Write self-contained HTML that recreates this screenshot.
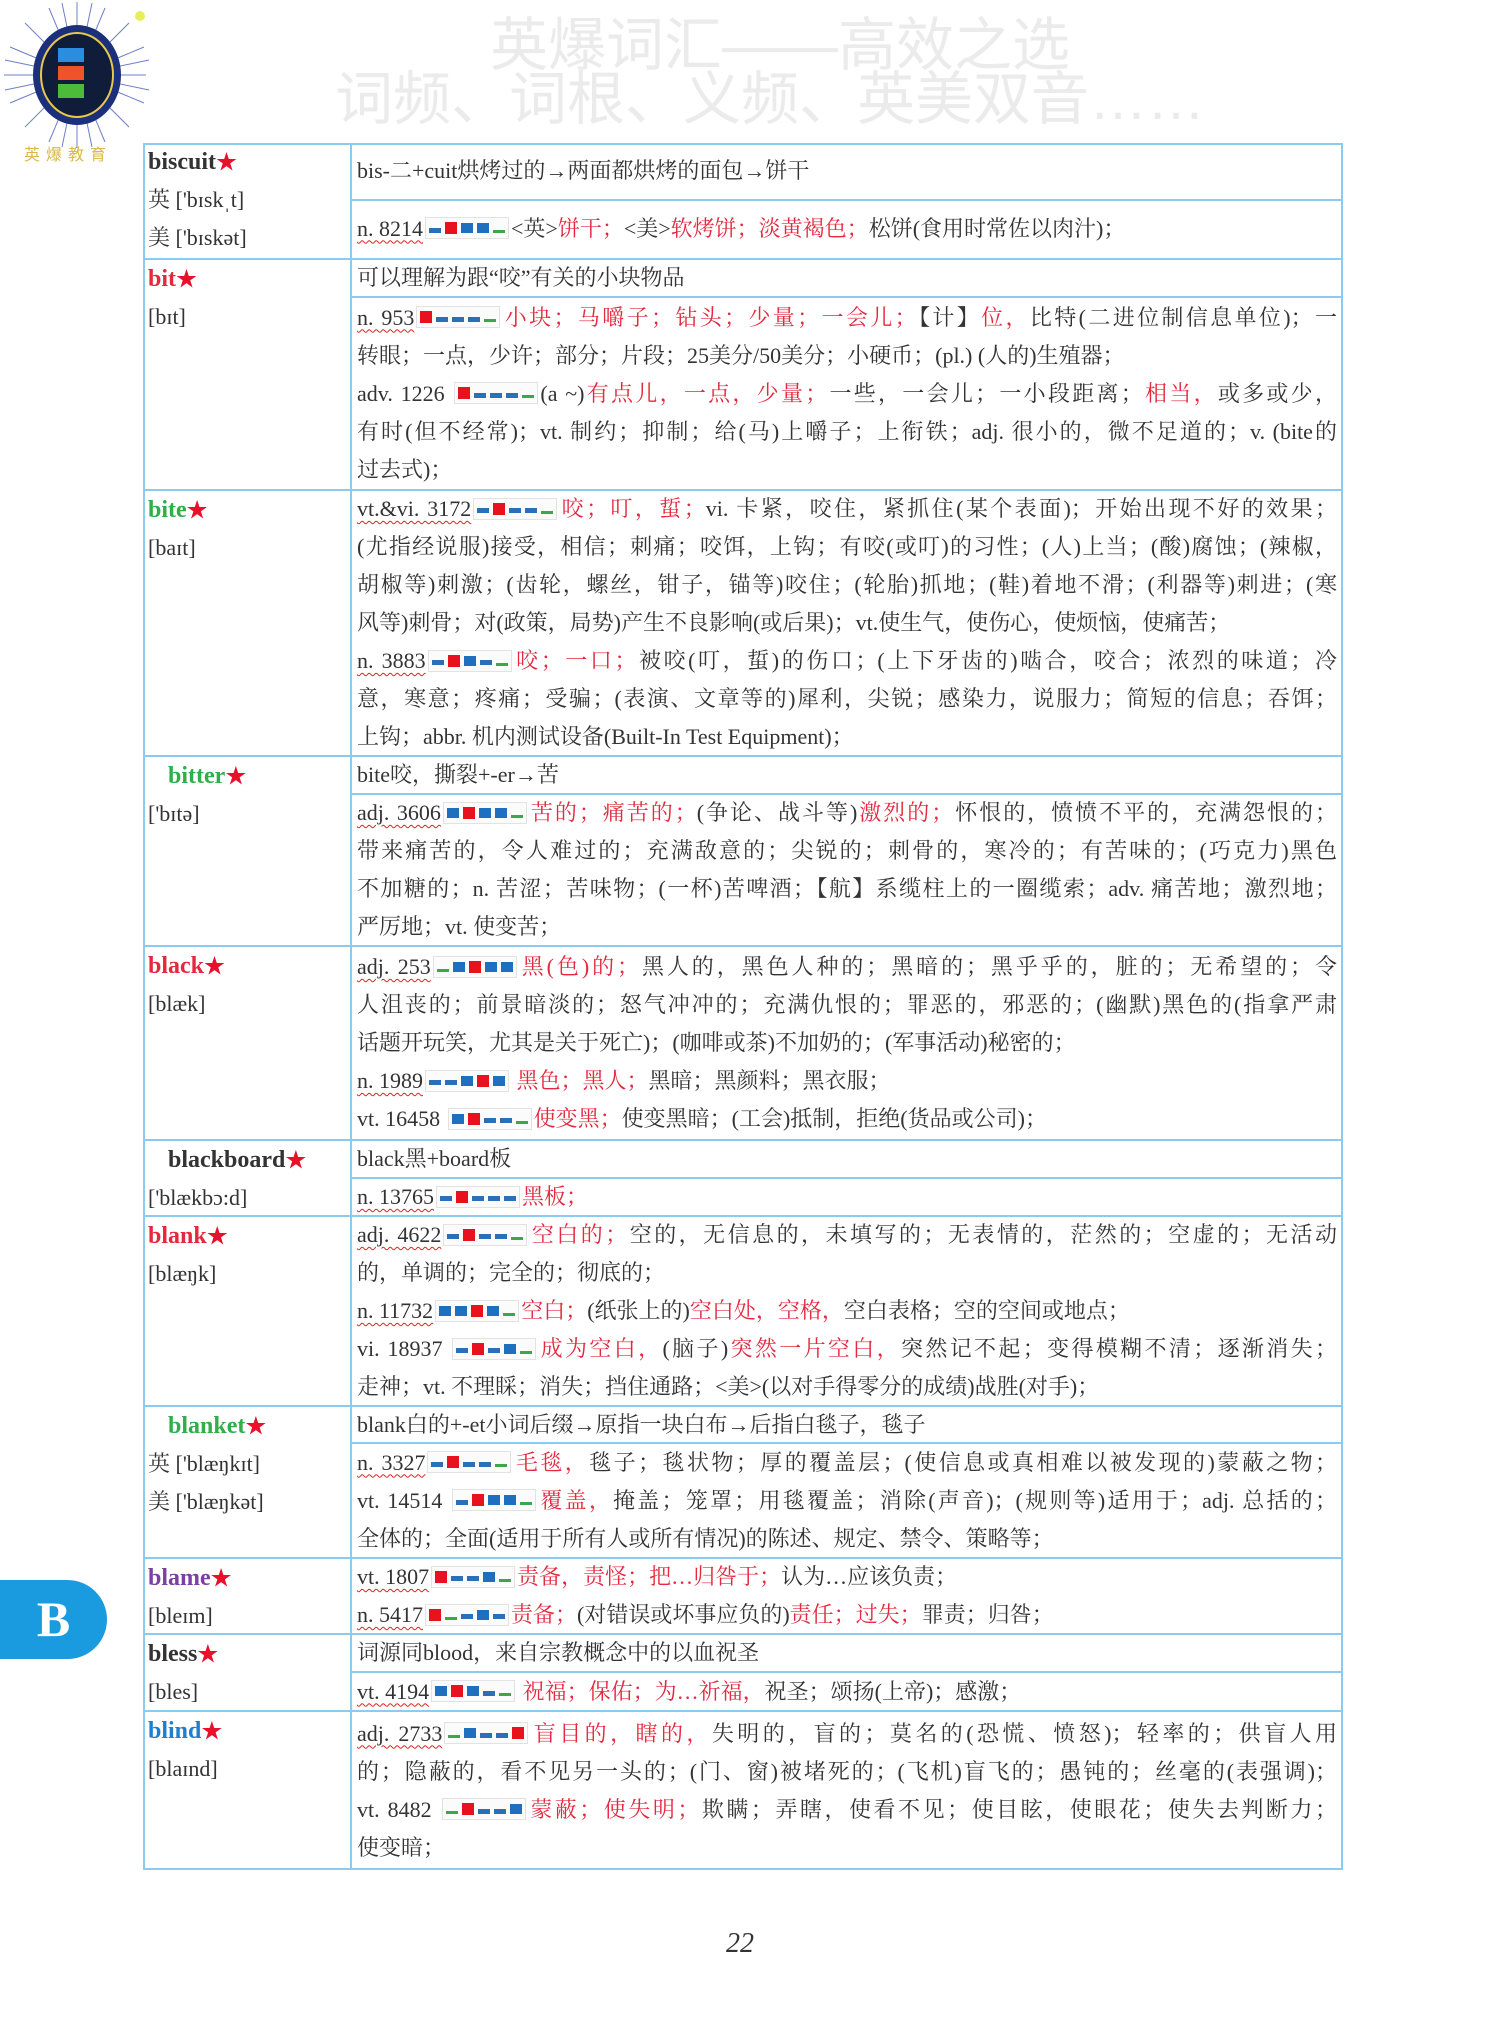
<!DOCTYPE html>
<html><head><meta charset="utf-8">
<style>
*{margin:0;padding:0;box-sizing:border-box}
body{width:1500px;height:2036px;background:#fff;position:relative;overflow:hidden;font-family:"Liberation Serif","Noto Serif CJK SC",serif;color:#333;font-size:22px}
.wm{position:absolute;left:0;width:1500px;text-align:center;color:#ebebeb;font-family:"Liberation Sans","Noto Sans CJK SC",sans-serif;font-size:58px;line-height:60px}
.tbl{position:absolute;left:143px;top:143px;width:1200px;height:1727px;border:2px solid #8ccbef}
.row{position:absolute;left:143px;width:1200px;border-top:2px solid #8ccbef}
.lc{position:absolute;left:0;top:0;width:209px;height:100%;border-right:2px solid #8ccbef;padding-left:5px}
.rc{position:absolute;left:209px;top:0;right:0;height:100%}
.blk{display:flex;flex-direction:column;justify-content:center;padding:0 6px 0 5px}
.et{border-bottom:2px solid #8ccbef}
.ln{height:38px;line-height:38px;white-space:nowrap}
.f{text-align:justify;text-align-last:justify}
.hw{font-weight:bold;font-size:24px;height:38px;line-height:38px}
.hw .st{color:#e8102a;font-size:21px}
.ph{height:38px;line-height:38px}
.r{color:#e4283e}
.u{text-decoration:underline wavy #d22;text-decoration-thickness:1px;text-underline-offset:4px}
.fb{display:inline-flex;align-items:center;width:84px;height:22px;border:1px solid #e2e2e2;vertical-align:middle;margin:-4px 2px 0;padding:0 3px;background:#fbfbfb}
.fb i{display:block;width:12px;margin-right:4px;flex:none}
.fb .R{height:12px;background:#e8121e}
.fb .Q{height:10px;background:#1e6fc0}
.fb .b{height:5px;background:#2b6fb8;margin-top:4px}
.fb .g{height:3px;background:#3aa84a;margin-top:7px}
</style></head><body>

<svg style="position:absolute;left:0;top:0" width="150" height="170" viewBox="0 0 150 170">
<g stroke="#6d7fc9" stroke-width="1">
<line x1="77" y1="75" x2="77" y2="2"/><line x1="77" y1="75" x2="77" y2="148"/><line x1="77" y1="75" x2="4" y2="75"/><line x1="77" y1="75" x2="146" y2="75"/>
<line x1="77" y1="75" x2="25" y2="23"/><line x1="77" y1="75" x2="129" y2="23"/><line x1="77" y1="75" x2="25" y2="127"/><line x1="77" y1="75" x2="129" y2="127"/>
<line x1="77" y1="75" x2="49" y2="8"/><line x1="77" y1="75" x2="105" y2="8"/><line x1="77" y1="75" x2="49" y2="142"/><line x1="77" y1="75" x2="105" y2="142"/>
<line x1="77" y1="75" x2="10" y2="47"/><line x1="77" y1="75" x2="144" y2="47"/><line x1="77" y1="75" x2="10" y2="103"/><line x1="77" y1="75" x2="144" y2="103"/>
<line x1="77" y1="75" x2="62" y2="3"/><line x1="77" y1="75" x2="92" y2="3"/><line x1="77" y1="75" x2="62" y2="147"/><line x1="77" y1="75" x2="92" y2="147"/>
<line x1="77" y1="75" x2="5" y2="60"/><line x1="77" y1="75" x2="149" y2="60"/><line x1="77" y1="75" x2="5" y2="90"/><line x1="77" y1="75" x2="149" y2="90"/>
</g>
<circle cx="140" cy="16" r="5" fill="#e6ef5a"/>
<ellipse cx="77" cy="75" rx="44" ry="50" fill="#1b2f7a"/>
<ellipse cx="77" cy="75" rx="36" ry="42" fill="#0f1c3a" stroke="#e8c84c" stroke-width="2"/>
<rect x="58" y="48" width="26" height="14" fill="#2a8de0"/>
<rect x="58" y="66" width="26" height="14" fill="#f0522a"/>
<rect x="58" y="84" width="26" height="14" fill="#4dbb3a"/>
<text x="24" y="160" font-size="16" fill="#d9b94a" font-family="Noto Sans CJK SC,sans-serif" letter-spacing="6">英爆教育</text>
</svg>

<div class="wm" style="top:16px;left:30px">英爆词汇——高效之选</div>
<div class="wm" style="top:70px;left:20px">词频、词根、义频、英美双音……</div>

<div class="tbl"></div>

<!-- biscuit -->
<div class="row" style="top:143px;height:115px;border-top:none">
<div class="lc"><div class="hw">biscuit<span class="st">★</span></div><div class="ph">英 ['bɪskˌt]</div><div class="ph">美 ['bɪskət]</div></div>
<div class="rc"><div class="blk et" style="height:58px"><div class="ln">bis-二+cuit烘烤过的→两面都烘烤的面包→饼干</div></div>
<div class="blk" style="height:55px"><div class="ln"><span class="u">n. 8214</span><span class="fb"><i class="b"></i><i class="R"></i><i class="Q"></i><i class="Q"></i><i class="g"></i></span>&lt;英&gt;<span class="r">饼干；</span>&lt;美&gt;<span class="r">软烤饼；淡黄褐色；</span>松饼(食用时常佐以肉汁)；</div></div></div>
</div>

<!-- bit -->
<div class="row" style="top:258px;height:231px">
<div class="lc"><div class="hw" style="color:#e4283e">bit<span class="st">★</span></div><div class="ph">[bɪt]</div></div>
<div class="rc"><div class="blk et" style="height:38px"><div class="ln">可以理解为跟“咬”有关的小块物品</div></div>
<div class="blk" style="height:191px">
<div class="ln f"><span class="u">n. 953</span><span class="fb"><i class="R"></i><i class="b"></i><i class="b"></i><i class="b"></i><i class="g"></i></span><span class="r">小块；马嚼子；钻头；少量；一会儿；</span>【计】<span class="r">位，</span>比特(二进位制信息单位)；一</div>
<div class="ln">转眼；一点，少许；部分；片段；25美分/50美分；小硬币；(pl.) (人的)生殖器；</div>
<div class="ln f">adv. 1226 <span class="fb"><i class="R"></i><i class="b"></i><i class="b"></i><i class="b"></i><i class="g"></i></span>(a ~)<span class="r">有点儿，一点，少量；</span>一些，一会儿；一小段距离；<span class="r">相当，</span>或多或少，</div>
<div class="ln f">有时(但不经常)；vt. 制约；抑制；给(马)上嚼子；上衔铁；adj. 很小的，微不足道的；v. (bite的</div>
<div class="ln">过去式)；</div></div></div>
</div>

<!-- bite -->
<div class="row" style="top:489px;height:266px">
<div class="lc"><div class="hw" style="color:#2fae4a">bite<span class="st">★</span></div><div class="ph">[baɪt]</div></div>
<div class="rc"><div class="blk" style="height:264px">
<div class="ln f"><span class="u">vt.&amp;vi. 3172</span><span class="fb"><i class="b"></i><i class="R"></i><i class="b"></i><i class="b"></i><i class="g"></i></span><span class="r">咬；叮，蜇；</span>vi. 卡紧，咬住，紧抓住(某个表面)；开始出现不好的效果；</div>
<div class="ln f">(尤指经说服)接受，相信；刺痛；咬饵，上钩；有咬(或叮)的习性；(人)上当；(酸)腐蚀；(辣椒，</div>
<div class="ln f">胡椒等)刺激；(齿轮，螺丝，钳子，锚等)咬住；(轮胎)抓地；(鞋)着地不滑；(利器等)刺进；(寒</div>
<div class="ln">风等)刺骨；对(政策，局势)产生不良影响(或后果)；vt.使生气，使伤心，使烦恼，使痛苦；</div>
<div class="ln f"><span class="u">n. 3883</span><span class="fb"><i class="b"></i><i class="R"></i><i class="Q"></i><i class="b"></i><i class="g"></i></span><span class="r">咬；一口；</span>被咬(叮，蜇)的伤口；(上下牙齿的)啮合，咬合；浓烈的味道；冷</div>
<div class="ln f">意，寒意；疼痛；受骗；(表演、文章等的)犀利，尖锐；感染力，说服力；简短的信息；吞饵；</div>
<div class="ln">上钩；abbr. 机内测试设备(Built-In Test Equipment)；</div></div></div>
</div>

<!-- bitter -->
<div class="row" style="top:755px;height:190px">
<div class="lc"><div class="hw" style="color:#2fae4a;padding-left:20px">bitter<span class="st">★</span></div><div class="ph">['bɪtə]</div></div>
<div class="rc"><div class="blk et" style="height:38px"><div class="ln">bite咬，撕裂+-er→苦</div></div>
<div class="blk" style="height:150px">
<div class="ln f"><span class="u">adj. 3606</span><span class="fb"><i class="Q"></i><i class="R"></i><i class="Q"></i><i class="Q"></i><i class="g"></i></span><span class="r">苦的；痛苦的；</span>(争论、战斗等)<span class="r">激烈的；</span>怀恨的，愤愤不平的，充满怨恨的；</div>
<div class="ln f">带来痛苦的，令人难过的；充满敌意的；尖锐的；刺骨的，寒冷的；有苦味的；(巧克力)黑色</div>
<div class="ln f">不加糖的；n. 苦涩；苦味物；(一杯)苦啤酒；【航】系缆柱上的一圈缆索；adv. 痛苦地；激烈地；</div>
<div class="ln">严厉地；vt. 使变苦；</div></div></div>
</div>

<!-- black -->
<div class="row" style="top:945px;height:194px">
<div class="lc"><div class="hw" style="color:#e4283e">black<span class="st">★</span></div><div class="ph">[blæk]</div></div>
<div class="rc"><div class="blk" style="height:192px">
<div class="ln f"><span class="u">adj. 253</span><span class="fb"><i class="g"></i><i class="Q"></i><i class="R"></i><i class="Q"></i><i class="Q"></i></span><span class="r">黑(色)的；</span>黑人的，黑色人种的；黑暗的；黑乎乎的，脏的；无希望的；令</div>
<div class="ln f">人沮丧的；前景暗淡的；怒气冲冲的；充满仇恨的；罪恶的，邪恶的；(幽默)黑色的(指拿严肃</div>
<div class="ln">话题开玩笑，尤其是关于死亡)；(咖啡或茶)不加奶的；(军事活动)秘密的；</div>
<div class="ln"><span class="u">n. 1989</span><span class="fb"><i class="b"></i><i class="b"></i><i class="Q"></i><i class="R"></i><i class="Q"></i></span> <span class="r">黑色；黑人；</span>黑暗；黑颜料；黑衣服；</div>
<div class="ln">vt. 16458 <span class="fb"><i class="Q"></i><i class="R"></i><i class="b"></i><i class="b"></i><i class="g"></i></span><span class="r">使变黑；</span>使变黑暗；(工会)抵制，拒绝(货品或公司)；</div></div></div>
</div>

<!-- blackboard -->
<div class="row" style="top:1139px;height:76px">
<div class="lc"><div class="hw" style="padding-left:20px">blackboard<span class="st">★</span></div><div class="ph">['blækbɔ:d]</div></div>
<div class="rc"><div class="blk et" style="height:38px"><div class="ln">black黑+board板</div></div>
<div class="blk" style="height:36px"><div class="ln"><span class="u">n. 13765</span><span class="fb"><i class="b"></i><i class="R"></i><i class="b"></i><i class="b"></i><i class="b"></i></span><span class="r">黑板；</span></div></div></div>
</div>

<!-- blank -->
<div class="row" style="top:1215px;height:190px">
<div class="lc"><div class="hw" style="color:#e4283e">blank<span class="st">★</span></div><div class="ph">[blæŋk]</div></div>
<div class="rc"><div class="blk" style="height:188px">
<div class="ln f"><span class="u">adj. 4622</span><span class="fb"><i class="b"></i><i class="R"></i><i class="b"></i><i class="b"></i><i class="g"></i></span><span class="r">空白的；</span>空的，无信息的，未填写的；无表情的，茫然的；空虚的；无活动</div>
<div class="ln">的，单调的；完全的；彻底的；</div>
<div class="ln"><span class="u">n. 11732</span><span class="fb"><i class="Q"></i><i class="Q"></i><i class="R"></i><i class="Q"></i><i class="g"></i></span><span class="r">空白；</span>(纸张上的)<span class="r">空白处，空格，</span>空白表格；空的空间或地点；</div>
<div class="ln f">vi. 18937 <span class="fb"><i class="b"></i><i class="R"></i><i class="b"></i><i class="Q"></i><i class="g"></i></span><span class="r">成为空白，</span>(脑子)<span class="r">突然一片空白，</span>突然记不起；变得模糊不清；逐渐消失；</div>
<div class="ln">走神；vt. 不理睬；消失；挡住通路；&lt;美&gt;(以对手得零分的成绩)战胜(对手)；</div></div></div>
</div>

<!-- blanket -->
<div class="row" style="top:1405px;height:152px">
<div class="lc"><div class="hw" style="color:#2fae4a;padding-left:20px">blanket<span class="st">★</span></div><div class="ph">英 ['blæŋkɪt]</div><div class="ph">美 ['blæŋkət]</div></div>
<div class="rc"><div class="blk et" style="height:37px"><div class="ln">blank白的+-et小词后缀→原指一块白布→后指白毯子，毯子</div></div>
<div class="blk" style="height:113px">
<div class="ln f"><span class="u">n. 3327</span><span class="fb"><i class="b"></i><i class="R"></i><i class="b"></i><i class="b"></i><i class="g"></i></span><span class="r">毛毯，</span>毯子；毯状物；厚的覆盖层；(使信息或真相难以被发现的)蒙蔽之物；</div>
<div class="ln f">vt. 14514 <span class="fb"><i class="b"></i><i class="R"></i><i class="Q"></i><i class="Q"></i><i class="g"></i></span><span class="r">覆盖，</span>掩盖；笼罩；用毯覆盖；消除(声音)；(规则等)适用于；adj. 总括的；</div>
<div class="ln">全体的；全面(适用于所有人或所有情况)的陈述、规定、禁令、策略等；</div></div></div>
</div>

<!-- blame -->
<div class="row" style="top:1557px;height:76px">
<div class="lc"><div class="hw" style="color:#7b3fa6">blame<span class="st">★</span></div><div class="ph">[bleɪm]</div></div>
<div class="rc"><div class="blk" style="height:74px">
<div class="ln"><span class="u">vt. 1807</span><span class="fb"><i class="R"></i><i class="b"></i><i class="b"></i><i class="Q"></i><i class="g"></i></span><span class="r">责备，责怪；把…归咎于；</span>认为…应该负责；</div>
<div class="ln"><span class="u">n. 5417</span><span class="fb"><i class="R"></i><i class="g"></i><i class="b"></i><i class="Q"></i><i class="b"></i></span><span class="r">责备；</span>(对错误或坏事应负的)<span class="r">责任；过失；</span>罪责；归咎；</div></div></div>
</div>

<!-- bless -->
<div class="row" style="top:1633px;height:77px">
<div class="lc"><div class="hw">bless<span class="st">★</span></div><div class="ph">[bles]</div></div>
<div class="rc"><div class="blk et" style="height:38px"><div class="ln">词源同blood，来自宗教概念中的以血祝圣</div></div>
<div class="blk" style="height:37px"><div class="ln"><span class="u">vt. 4194</span><span class="fb"><i class="Q"></i><i class="R"></i><i class="Q"></i><i class="b"></i><i class="g"></i></span> <span class="r">祝福；保佑；为…祈福，</span>祝圣；颂扬(上帝)；感激；</div></div></div>
</div>

<!-- blind -->
<div class="row" style="top:1710px;height:159px">
<div class="lc"><div class="hw" style="color:#1e7fd0">blind<span class="st">★</span></div><div class="ph">[blaɪnd]</div></div>
<div class="rc"><div class="blk" style="height:157px">
<div class="ln f"><span class="u">adj. 2733</span><span class="fb"><i class="g"></i><i class="Q"></i><i class="b"></i><i class="b"></i><i class="R"></i></span><span class="r">盲目的，瞎的，</span>失明的，盲的；莫名的(恐慌、愤怒)；轻率的；供盲人用</div>
<div class="ln f">的；隐蔽的，看不见另一头的；(门、窗)被堵死的；(飞机)盲飞的；愚钝的；丝毫的(表强调)；</div>
<div class="ln f">vt. 8482 <span class="fb"><i class="g"></i><i class="R"></i><i class="b"></i><i class="b"></i><i class="Q"></i></span><span class="r">蒙蔽；使失明；</span>欺瞒；弄瞎，使看不见；使目眩，使眼花；使失去判断力；</div>
<div class="ln">使变暗；</div></div></div>
</div>

<div style="position:absolute;left:0;top:1580px;width:107px;height:79px;background:#1a9be0;border-radius:0 40px 40px 0;color:#fff;font-weight:bold;font-size:50px;line-height:79px;text-align:center;font-family:'Liberation Serif',serif">B</div>

<div style="position:absolute;left:700px;top:1928px;width:80px;text-align:center;font-style:italic;font-size:28px;color:#333">22</div>
</body></html>
